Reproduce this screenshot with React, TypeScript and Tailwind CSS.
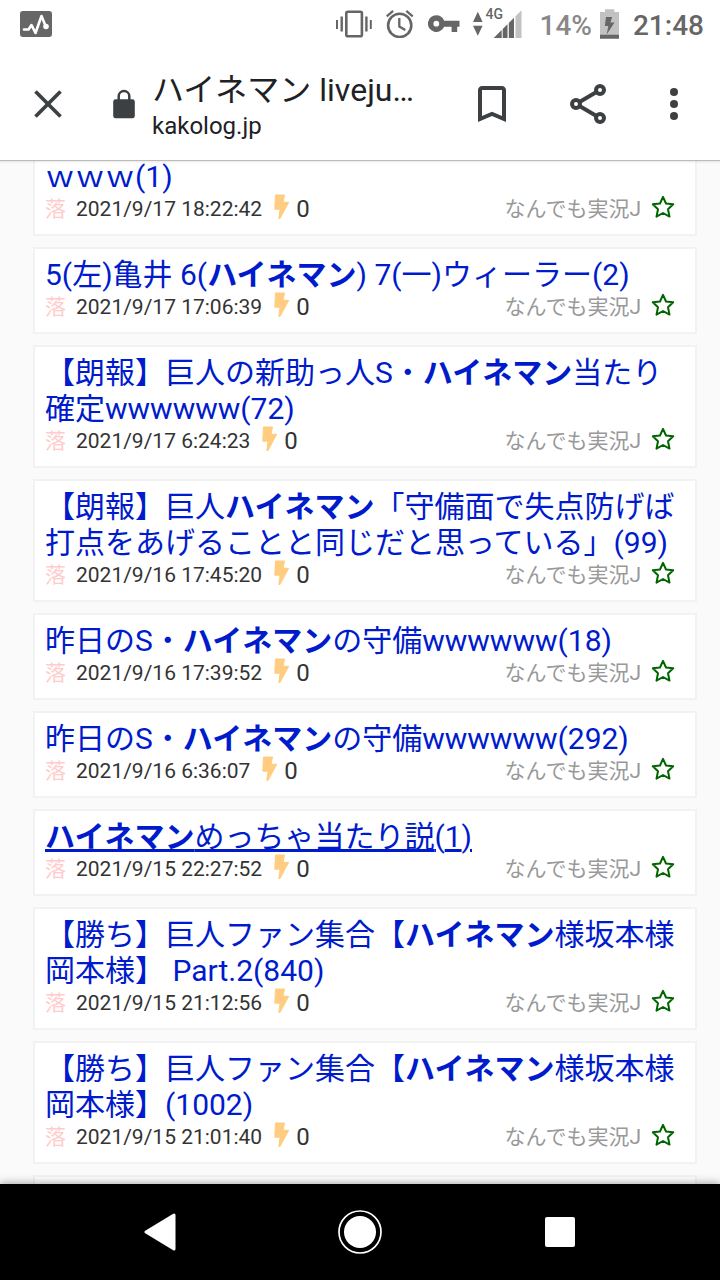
import React from 'react';

interface Thread {
  title: React.ReactNode;
  count: number;
  date: string;
  underlined?: boolean;
}

const Hit: React.FC = () => <b className="font-bold">ハイネマン</b>;

const threads: Thread[] = [
  { title: 'ｗｗｗ', count: 1, date: '2021/9/17 18:22:42' },
  { title: <>5(左)亀井 6(<Hit />) 7(一)ウィーラー</>, count: 2, date: '2021/9/17 17:06:39' },
  { title: <>【朗報】巨人の新助っ人S・<Hit />当たり確定wwwwww</>, count: 72, date: '2021/9/17 6:24:23' },
  { title: <>【朗報】巨人<Hit />「守備面で失点防げば打点をあげることと同じだと思っている」</>, count: 99, date: '2021/9/16 17:45:20' },
  { title: <>昨日のS・<Hit />の守備wwwwww</>, count: 18, date: '2021/9/16 17:39:52' },
  { title: <>昨日のS・<Hit />の守備wwwwww</>, count: 292, date: '2021/9/16 6:36:07' },
  { title: <><Hit />めっちゃ当たり説</>, count: 1, date: '2021/9/15 22:27:52', underlined: true },
  { title: <>【勝ち】巨人ファン集合【<Hit />様坂本様岡本様】 Part.2</>, count: 840, date: '2021/9/15 21:12:56' },
  { title: <>【勝ち】巨人ファン集合【<Hit />様坂本様岡本様】</>, count: 1002, date: '2021/9/15 21:01:40' },
];

const StatusBar: React.FC = () => (
  <div className="flex h-12 shrink-0 items-center justify-between pl-5 pr-4 text-[#666]">
    <svg width="32" height="26" viewBox="0 0 32 26">
      <rect width="32" height="26" rx="3" fill="currentColor" />
      <path d="M4 18.500h4.500l3-4.500 4 8L21.500 5l4.500 11" fill="none" stroke="#fff" strokeWidth="2.600" strokeLinejoin="round" strokeLinecap="round" />
      <circle cx="26" cy="15.500" r="2.800" fill="#fff" />
    </svg>

    <div className="flex items-center">
      {/* Vibrate */}
      <svg className="mr-3.5" width="36" height="28" viewBox="336 10 36 28">
        <rect x="346.300" y="11.700" width="15.600" height="24.600" rx="1.500" fill="none" stroke="currentColor" strokeWidth="2.600" />
        <path d="M336 20h2v9h-2zM340.500 16.500h2.400v15h-2.400zM365.200 16.500h2.400v15h-2.400zM369.800 20h2v9h-2z" fill="currentColor" />
      </svg>
      {/* Alarm */}
      <svg className="mr-3.5" width="28" height="28" viewBox="386 10 28 28">
        <circle cx="399.700" cy="25.400" r="11.600" fill="none" stroke="currentColor" strokeWidth="2.600" />
        <path d="M399.300 18v8.500l6 3.600M386.700 16.300l6.400-5.400M412.700 16.300l-6.400-5.400" fill="none" stroke="currentColor" strokeWidth="2.300" />
      </svg>
      {/* VPN key */}
      <svg className="mr-3" width="32" height="28" viewBox="428 10 32 28">
        <path
          fillRule="evenodd"
          fill="currentColor"
          d="M436.300 15.200a8.400 8.400 0 0 1 7.800 5.500H459.500v6H457.200v5.300h-5.600v-5.300h-7.500a8.400 8.400 0 1 1-7.800-11.500zm0 5.600a2.900 2.900 0 1 0 0 5.800 2.900 2.900 0 0 0 0-5.800z"
        />
      </svg>
      {/* Mobile data */}
      <div className="relative mr-4.5">
        <svg width="50" height="28" viewBox="472 10 50 28">
          <path d="M473 22l4.800-10.200 4.800 10.200zM473 25.800h9.600l-4.800 10z" fill="currentColor" />
          <path d="M493.700 38l8-8v8zM502.700 29l4.800-4.800v13.800h-4.800zM508.800 22.900l5.200-5.200v20.300h-5.200z" fill="currentColor" />
          <path d="M515.500 16.200l6-6v27.800h-6z" fill="#c2c2c2" />
        </svg>
        <span className="absolute -top-1 left-3.5 text-[14px] leading-4 font-medium">4G</span>
      </div>
      <span className="mt-1 mr-2 text-[28px] leading-8 font-medium text-[#888]">14%</span>
      {/* Battery */}
      <svg className="mr-3.5" width="19" height="30" viewBox="599 9 19 30">
        <path d="M604 9.300h9.300V12h4.700v23h-19V12h5z" fill="#c2c2c2" />
        <path d="M599 34.700h19v4h-19zM605 17h6.200l-1.800 5.500h4.100l-7.800 12 1.600-8.500h-3.500z" fill="currentColor" />
      </svg>
      <span className="mt-1 text-[28px] leading-8 font-medium">21:48</span>
    </div>
  </div>
);

const Toolbar: React.FC = () => (
  <header className="relative z-10 flex h-[113px] shrink-0 items-center border-b border-[#bbb] bg-white text-[#3c4043] shadow-[0_1px_2px_rgba(0,0,0,0.1)]">
    <button aria-label="閉じる" className="ml-6 flex size-12 items-center justify-center">
      <svg width="28" height="28" viewBox="0 0 28 28" fill="none" stroke="currentColor" strokeWidth="3.700">
        <path d="M1.500 1.500l25 25M26.500 1.500l-25 25" />
      </svg>
    </button>
    <svg className="ml-10 shrink-0" width="24" height="30" viewBox="112 88 24 30">
      <rect x="113.200" y="98.300" width="21.600" height="19" rx="2.400" fill="currentColor" />
      <path d="M118.700 99v-3.700a5.300 5.300 0 0 1 10.600 0V99" fill="none" stroke="currentColor" strokeWidth="2.500" />
    </svg>
    <div className="mt-1 ml-4 min-w-0 flex-1 text-[#202124]">
      <h1 className="truncate text-[32px] leading-10">ハイネマン liveju…</h1>
      <p className="text-2xl leading-8">kakolog.jp</p>
    </div>
    <button aria-label="ブックマーク" className="flex size-12 items-center justify-center">
      <svg width="48" height="48" viewBox="0 0 24 24" fill="currentColor">
        <path d="M17 3H7c-1.100 0-2 .9-2 2v16l7-3 7 3V5c0-1.100-.9-2-2-2zm0 15l-5-2.180L7 18V5h10v13z" />
      </svg>
    </button>
    <button aria-label="共有" className="ml-12 flex size-12 items-center justify-center">
      <svg width="48" height="48" viewBox="564 80 48 48" fill="none" stroke="currentColor" strokeWidth="4">
        <circle cx="576" cy="104" r="4" />
        <circle cx="600" cy="90" r="4" />
        <circle cx="600" cy="118" r="4" />
        <path d="M579.500 102l17-10M579.500 106l17 10" />
      </svg>
    </button>
    <button aria-label="メニュー" className="mr-[22px] ml-[38px] flex size-12 items-center justify-center">
      <svg width="8" height="32" viewBox="0 0 8 32" fill="currentColor">
        <circle cx="4" cy="4" r="4" />
        <circle cx="4" cy="16" r="4" />
        <circle cx="4" cy="28" r="4" />
      </svg>
    </button>
  </header>
);

const ThreadCard: React.FC<{ thread: Thread }> = ({ thread }) => (
  <li className="border-2 border-[#f2f2f2] bg-white pt-2 pr-5 pb-[11px] pl-2.5">
    <a
      href="#"
      className={
        thread.underlined
          ? 'block text-[30px] leading-9 text-[#001bcc] underline'
          : 'block text-[30px] leading-9 text-[#001bcc]'
      }
    >
      {thread.title}({thread.count})
    </a>
    <div className="flex h-7 items-center">
      <span className="text-[21px] leading-7 text-[#ffcccc]">落</span>
      <time className="ml-2.5 text-[21px] leading-7 text-[#333]">{thread.date}</time>
      <svg className="mb-1 ml-3" width="16" height="26" viewBox="0 0 16 26">
        <path d="M1.500 1h9L9 8.300h5.700L6 24.500H4.800l1.300-9.300H.8z" fill="#ffcc80" stroke="#ffcc80" strokeLinejoin="round" />
      </svg>
      <span className="ml-1.5 text-2xl leading-7 text-[#333]">0</span>
      <a href="#" className="ml-auto text-[21px] leading-7 text-[#999]">なんでも実況J</a>
      <button aria-label="お気に入り" className="mb-1 ml-2.5">
        <svg width="24" height="24" viewBox="0 0 24 24" fill="none" stroke="#006400" strokeWidth="2" strokeLinejoin="round">
          <path d="M12 1.800l3 6.700 7.200.8-5.200 5 1.500 7.300L12 18l-6.500 3.600L7 14.300 1.800 9.300 9 8.500z" />
        </svg>
      </button>
    </div>
  </li>
);

const NavBar: React.FC = () => (
  <nav className="relative z-10 flex h-24 shrink-0 items-center justify-center gap-[152px] bg-black shadow-[0_-1px_8px_rgba(0,0,0,0.35)]">
    <button aria-label="戻る" className="flex size-12 items-center justify-center">
      <svg width="32" height="38" viewBox="0 0 32 38">
        <path d="M2 19L30 2v34z" fill="#fff" stroke="#fff" strokeWidth="3" strokeLinejoin="round" />
      </svg>
    </button>
    <button aria-label="ホーム" className="flex size-12 items-center justify-center">
      <svg width="44" height="44" viewBox="0 0 44 44">
        <circle cx="22" cy="22" r="21" fill="none" stroke="#fff" strokeWidth="1.700" />
        <circle cx="22" cy="22" r="16" fill="#fff" />
      </svg>
    </button>
    <button aria-label="履歴" className="flex size-12 items-center justify-center">
      <span className="size-[30px] rounded-xs bg-white" />
    </button>
  </nav>
);

const App: React.FC = () => {
  return (
    <div className="flex h-screen flex-col bg-white font-['Roboto','Noto_Sans_CJK_JP',sans-serif]" lang="ja">
      <StatusBar />
      <Toolbar />
      <main className="min-h-0 flex-1 overflow-hidden bg-[#fafafa] pr-[23px] pl-[33px]">
        {/* The list is scrolled a little, the first card sits partly under the toolbar */}
        <ul className="-mt-3 flex flex-col gap-[11px]">
          {threads.map((thread) => (
            <ThreadCard key={thread.date} thread={thread} />
          ))}
          <li className="h-20 border-2 border-[#f2f2f2] bg-white" />
        </ul>
      </main>
      <NavBar />
    </div>
  );
};

export default App;
